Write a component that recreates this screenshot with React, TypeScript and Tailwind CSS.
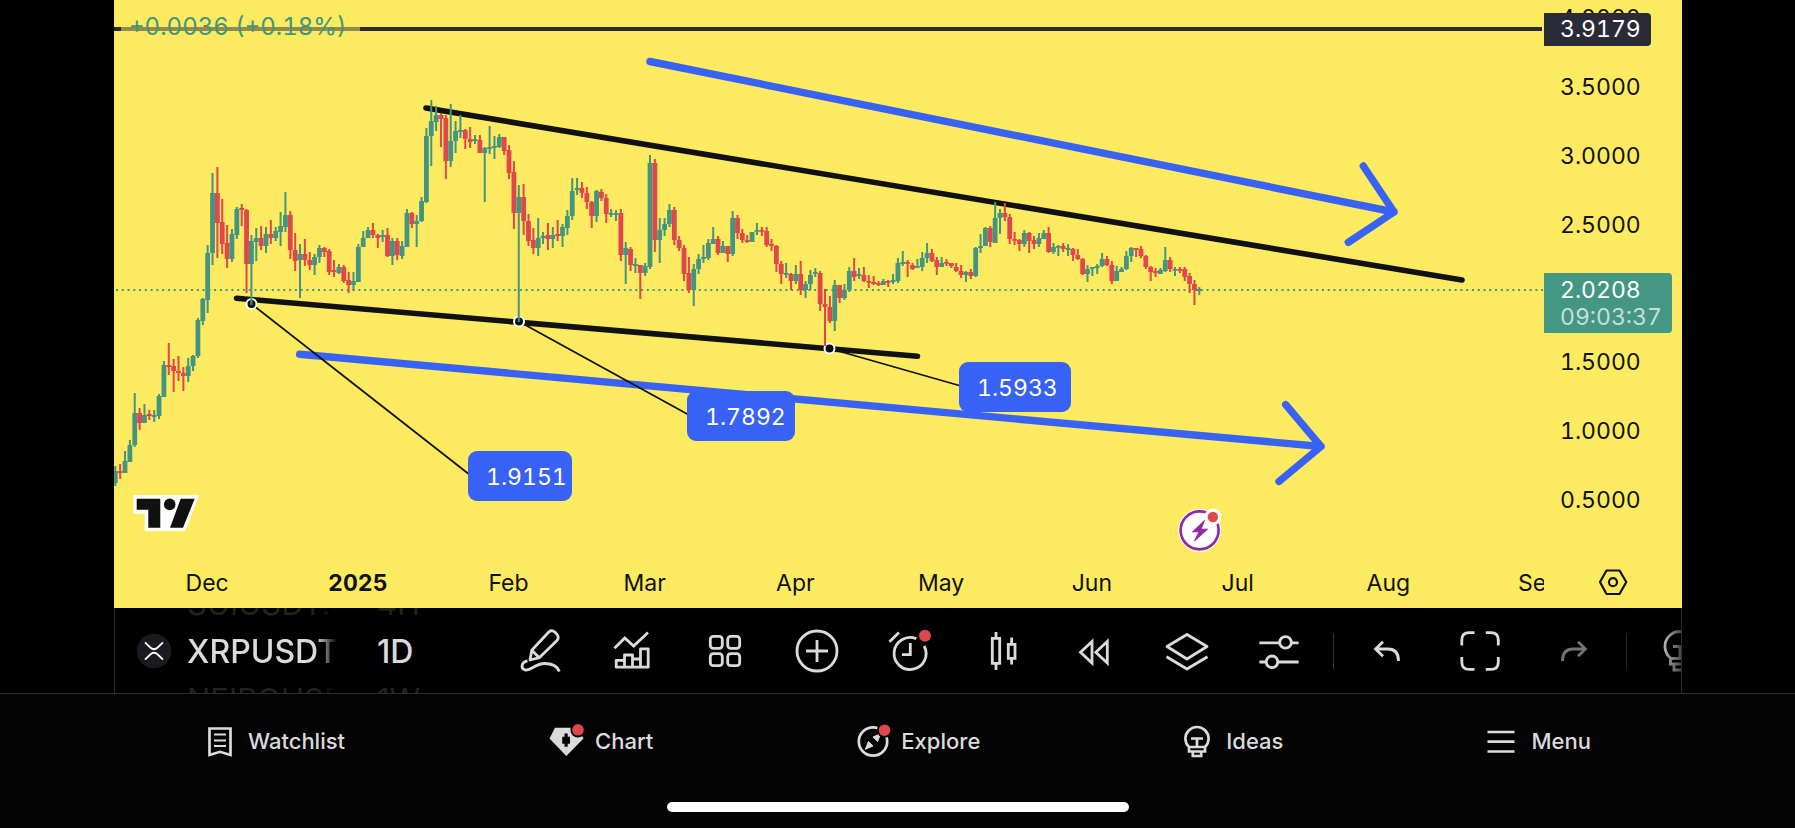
import React from "react";

type Candle = [dir: 0 | 1, high: number, top: number, bottom: number, low: number];

const UP = "#43957f";
const DOWN = "#e0474c";
const BLUE = "#3861f6";
const INK = "#111111";
const SANS = "Inter, 'Noto Sans', sans-serif";

const FIRST_X = 115.3;
const STEP = 4.861;

// Daily candles: [rising, high, body top, body bottom, low]
const candles: Candle[] = [
  [1, 466, 471, 483, 486], [0, 464, 471, 473, 479], [1, 451, 461, 473, 473], [1, 440, 445, 462, 462],
  [1, 393, 413, 445, 447], [0, 408, 413, 423, 430], [1, 404, 415, 423, 423], [0, 410, 414, 416, 420],
  [1, 410, 415, 417, 422], [1, 394, 396, 416, 419], [1, 361, 365, 397, 397], [0, 343, 365, 367, 375],
  [0, 359, 366, 371, 392], [0, 356, 371, 373, 381], [0, 367, 373, 376, 391], [1, 358, 366, 376, 382],
  [1, 355, 356, 366, 371], [1, 318, 320, 356, 358], [1, 298, 299, 321, 325], [1, 245, 253, 300, 313],
  [1, 173, 193, 253, 265], [0, 167, 193, 223, 258], [0, 199, 222, 244, 254], [0, 225, 243, 259, 268],
  [1, 229, 234, 259, 262], [1, 207, 209, 235, 239], [0, 204, 208, 210, 226], [0, 209, 210, 264, 293],
  [1, 235, 241, 264, 305], [1, 228, 238, 242, 261], [0, 226, 238, 246, 250], [1, 227, 234, 246, 253],
  [0, 220, 234, 238, 244], [1, 227, 231, 238, 241], [1, 212, 226, 232, 246], [1, 192, 215, 227, 232],
  [0, 211, 215, 250, 259], [0, 233, 250, 261, 271], [1, 244, 254, 260, 298], [0, 239, 254, 260, 266],
  [0, 252, 260, 265, 270], [1, 254, 257, 265, 275], [1, 245, 248, 257, 263], [0, 247, 248, 252, 257],
  [0, 249, 251, 272, 275], [0, 260, 270, 272, 277], [1, 264, 267, 273, 274], [0, 265, 267, 281, 283],
  [0, 272, 280, 285, 293], [1, 272, 281, 285, 291], [1, 244, 247, 282, 282], [1, 231, 238, 247, 247],
  [1, 227, 230, 238, 238], [0, 223, 230, 235, 238], [0, 234, 235, 238, 248], [1, 230, 235, 237, 242],
  [0, 228, 235, 256, 257], [1, 238, 241, 256, 265], [0, 238, 241, 255, 260], [1, 241, 246, 256, 259],
  [1, 209, 213, 247, 247], [0, 212, 213, 224, 228], [1, 215, 221, 224, 247], [1, 197, 201, 221, 222],
  [1, 128, 136, 202, 203], [1, 100, 121, 136, 166], [1, 106, 115, 122, 131], [0, 113, 115, 119, 147],
  [0, 115, 118, 161, 179], [1, 104, 141, 161, 167], [1, 121, 131, 141, 153], [1, 115, 130, 131, 138],
  [0, 129, 130, 139, 149], [0, 127, 139, 142, 148], [1, 135, 139, 141, 144], [0, 135, 140, 153, 153],
  [1, 147, 148, 153, 202], [1, 126, 147, 148, 154], [1, 136, 146, 147, 159], [1, 134, 137, 147, 148],
  [0, 137, 137, 151, 155], [0, 145, 150, 173, 179], [0, 161, 172, 213, 229], [1, 185, 197, 213, 322],
  [0, 184, 197, 221, 235], [0, 214, 221, 241, 246], [0, 228, 240, 248, 254], [1, 218, 238, 248, 256],
  [1, 232, 236, 238, 244], [0, 223, 235, 239, 250], [1, 227, 235, 239, 248], [0, 220, 234, 236, 241],
  [1, 224, 227, 236, 247], [1, 210, 216, 228, 235], [1, 178, 191, 216, 220], [1, 178, 188, 190, 195],
  [0, 182, 188, 193, 198], [0, 187, 193, 202, 209], [0, 201, 202, 216, 228], [1, 190, 191, 216, 222],
  [0, 189, 192, 198, 201], [0, 194, 198, 214, 223], [1, 209, 213, 215, 217], [1, 210, 213, 214, 221],
  [0, 209, 213, 255, 261], [1, 242, 248, 255, 284], [0, 247, 249, 265, 271], [1, 258, 264, 266, 273],
  [0, 265, 265, 273, 299], [1, 263, 266, 273, 276], [1, 155, 163, 267, 269], [0, 159, 163, 240, 252],
  [1, 218, 230, 240, 263], [1, 218, 224, 230, 236], [1, 204, 210, 224, 227], [0, 207, 210, 240, 245],
  [0, 236, 240, 248, 251], [0, 245, 248, 274, 281], [0, 257, 273, 290, 293], [1, 264, 269, 290, 306],
  [1, 254, 259, 269, 274], [1, 245, 257, 259, 263], [1, 239, 243, 258, 260], [1, 227, 239, 244, 244],
  [0, 236, 239, 253, 255], [1, 241, 246, 253, 253], [0, 246, 246, 254, 262], [1, 211, 218, 254, 256],
  [0, 215, 218, 233, 239], [0, 229, 233, 240, 243], [0, 235, 240, 241, 243], [1, 232, 232, 242, 242],
  [1, 223, 230, 231, 235], [0, 227, 230, 231, 236], [0, 227, 231, 245, 247], [0, 239, 244, 246, 251],
  [0, 245, 246, 264, 272], [0, 261, 264, 274, 284], [1, 263, 273, 274, 278], [0, 273, 274, 281, 290],
  [1, 265, 274, 281, 284], [0, 261, 274, 290, 295], [1, 281, 284, 290, 298], [1, 270, 275, 284, 290],
  [1, 268, 272, 273, 277], [0, 271, 273, 304, 311], [0, 289, 304, 307, 346], [0, 296, 307, 321, 323],
  [1, 280, 285, 321, 331], [0, 285, 285, 298, 303], [1, 284, 290, 298, 300], [1, 267, 271, 290, 292],
  [0, 258, 271, 277, 281], [1, 268, 274, 276, 279], [0, 267, 275, 281, 282], [0, 275, 281, 282, 288],
  [0, 276, 282, 284, 285], [0, 281, 283, 284, 286], [1, 279, 281, 285, 285], [0, 280, 281, 282, 287],
  [1, 274, 280, 282, 284], [1, 258, 263, 281, 283], [1, 251, 262, 264, 266], [0, 260, 262, 263, 277],
  [0, 263, 265, 269, 270], [1, 259, 266, 267, 268], [1, 252, 258, 267, 271], [1, 243, 253, 258, 263],
  [0, 249, 253, 261, 262], [0, 257, 260, 267, 275], [1, 257, 263, 267, 267], [0, 259, 262, 263, 266],
  [0, 263, 263, 266, 268], [0, 263, 267, 271, 272], [0, 265, 271, 275, 278], [1, 271, 272, 275, 282],
  [0, 269, 272, 276, 279], [1, 247, 248, 276, 277], [1, 234, 246, 248, 253], [1, 227, 228, 246, 246],
  [0, 226, 228, 242, 247], [1, 202, 218, 243, 243], [1, 209, 213, 218, 234], [0, 203, 213, 217, 221],
  [0, 214, 217, 239, 244], [0, 232, 239, 240, 245], [0, 239, 240, 244, 251], [1, 230, 233, 244, 247],
  [0, 232, 233, 241, 253], [0, 236, 240, 244, 249], [1, 233, 238, 244, 247], [1, 230, 233, 239, 239],
  [0, 227, 233, 252, 253], [1, 243, 247, 252, 254], [1, 245, 246, 247, 256], [0, 243, 246, 249, 252],
  [1, 244, 248, 250, 256], [0, 248, 249, 255, 261], [0, 249, 255, 259, 260], [0, 258, 259, 274, 275],
  [1, 265, 269, 274, 282], [1, 267, 267, 268, 276], [1, 264, 266, 268, 274], [1, 253, 259, 266, 267],
  [0, 256, 259, 265, 266], [0, 261, 265, 281, 284], [1, 266, 271, 281, 281], [1, 267, 269, 272, 272],
  [1, 251, 256, 269, 270], [1, 247, 248, 256, 262], [0, 248, 248, 250, 257], [0, 246, 249, 256, 258],
  [0, 255, 256, 267, 269], [0, 266, 267, 272, 281], [0, 268, 271, 273, 277], [1, 268, 270, 274, 274],
  [1, 247, 260, 271, 272], [0, 257, 260, 269, 272], [1, 267, 269, 270, 276], [0, 267, 269, 270, 273],
  [0, 267, 269, 277, 281], [0, 273, 276, 284, 293], [0, 280, 284, 290, 305], [1, 287, 289, 291, 295],
];

// Label and the index of the candle on the first day of that month
const months: [string, number][] = [
  ["Dec", 19], ["2025", 50], ["Feb", 81], ["Mar", 109], ["Apr", 140],
  ["May", 170], ["Jun", 201], ["Jul", 231], ["Aug", 262], ["Sep", 293],
];

const callouts = [
  { label: "1.9151", x: 468, y: 451, w: 104, from: [251.5, 304] },
  { label: "1.7892", x: 687, y: 391, w: 108, from: [519, 321.5] },
  { label: "1.5933", x: 959, y: 362, w: 112, from: [829.5, 348.5] },
];

// The 2.0000 tick gives way to the last-price tag
const prices = ["4.0000", "3.5000", "3.0000", "2.5000", "", "1.5000", "1.0000", "0.5000"];

function PriceChart() {
  return (
    <svg viewBox="114 0 1430 608" className="block h-auto w-full tabular-nums" role="img" aria-label="XRPUSDT daily candles">
      <path d="M114 29H1542" stroke="#2b2b38" strokeWidth="4" />
      <path d="M116 290H1543" stroke={UP} strokeWidth="2" strokeDasharray="2 3.77" />

      <g fill="none" stroke={INK} strokeWidth="5.6" strokeLinecap="round">
        <path d="M426 108L1462 280" />
        <path d="M236.5 298.3L917.5 356.2" />
      </g>
      <g fill="none" stroke={BLUE} strokeWidth="7.4" strokeLinecap="round" strokeLinejoin="round">
        <path d="M650 61.5L1394 212M1363.3 166L1394 212L1348.3 242.3" />
        <path d="M299.7 354.3L1321 446.5M1285.7 404.7L1321 446.5L1279 481.5" />
      </g>

      {callouts.map((c) => (
        <g key={c.label}>
          <path d={`M${c.from[0]} ${c.from[1]}L${c.x + 2} ${c.y + 24}`} stroke={INK} strokeWidth="1.8" />
          <circle cx={c.from[0]} cy={c.from[1]} r="5" fill={INK} stroke="#fff" strokeWidth="2" />
        </g>
      ))}

      {candles.map(([up, high, top, bottom, low], i) => {
        const x = FIRST_X + i * STEP;
        const color = up ? UP : DOWN;
        return (
          <g key={i} fill={color}>
            <rect x={x - 1} y={high} width="2" height={low - high} />
            <rect x={x - 2.4} y={top} width="4.8" height={Math.max(bottom - top, 1.8)} />
          </g>
        );
      })}

      {callouts.map((c) => (
        <g key={c.label}>
          <rect x={c.x} y={c.y} width={c.w} height="50" rx="9" fill={BLUE} />
          <text x={c.x + 18} y={c.y + 34} fill="#fff" fontFamily={SANS} fontSize="23">
            {c.label}
          </text>
        </g>
      ))}

      <g>
        <path d="M133.3 495H199.3L185.3 531H144.7V513.7H133.3Z" fill="#fff" />
        <path d="M136.7 498.7H160.3V527.7H148.3V509.7H136.7ZM180.7 498.7H194.7L183 527.7H170Z" fill={INK} />
        <circle cx="169.7" cy="504.4" r="5.8" fill={INK} />
      </g>

      <g>
        <circle cx="1199.6" cy="530.3" r="21.5" fill="#fff" />
        <circle cx="1199.6" cy="530.3" r="19" fill="#fff" stroke="#8e2aa8" strokeWidth="2.7" />
        <path d="M1204.5 520.5L1192.5 531.8H1199L1194.5 541L1207.5 529.2H1201Z" fill="#8e2aa8" stroke="#8e2aa8" strokeLinejoin="round" />
        <circle cx="1212.9" cy="517" r="8.5" fill="#fff" />
        <circle cx="1212.9" cy="517" r="5.2" fill={DOWN} />
      </g>

      {months.map(([label, day]) => (
        <text
          key={label}
          x={FIRST_X + day * STEP - 0.5}
          y="591"
          textAnchor="middle"
          fill={INK}
          fontFamily={SANS}
          fontSize="23"
          fontWeight={label === "2025" ? 700 : 400}
        >
          {label}
        </text>
      ))}
    </svg>
  );
}

function PriceAxis() {
  return (
    <div className="relative w-[138px] shrink-0 text-[23px] text-[#111111] tabular-nums">
      <div className="flex h-[516px] flex-col justify-between pt-0.5 pl-4 leading-8">
        {prices.map((p, i) => (
          <span key={i} className="h-8">
            {p}
          </span>
        ))}
      </div>
      <div className="absolute top-[13px] left-0 rounded-r bg-[#2b2b38] pr-2.5 pl-4 leading-[33px] text-white">3.9179</div>
      <div className="absolute top-[273px] left-0 rounded-r bg-[#449782] pt-1 pr-2.5 pb-0.5 pl-4 leading-[27px] text-white">
        <div>2.0208</div>
        <div className="text-[#c6e0d9]">09:03:37</div>
      </div>
      <button aria-label="Chart settings" className="absolute bottom-2.5 left-[53px]">
        <svg width="32" height="32" viewBox="0 0 32 32" fill="none" stroke={INK} strokeWidth="2.2" className="block">
          <path d="M9.5 4.5H22.5L29.3 16L22.5 28H9.5L3 16Z" strokeLinejoin="round" />
          <circle cx="16" cy="16.2" r="4" />
        </svg>
      </button>
    </div>
  );
}

function ToolButton({ label, muted, children }: { label: string; muted?: boolean; children: React.ReactNode }) {
  return (
    <button aria-label={label} className={muted ? "shrink-0 text-[#737373]" : "shrink-0 text-[#dbdbdb]"}>
      <svg width="44" height="44" viewBox="0 0 44 44" fill="none" stroke="currentColor" strokeWidth="2.8" className="block">
        {children}
      </svg>
    </button>
  );
}

function Picker({ items, wide }: { items: [string, string, string]; wide?: boolean }) {
  return (
    <div
      className={
        wide
          ? "flex h-full w-[150px] shrink-0 flex-col justify-center overflow-hidden pt-0.5 whitespace-nowrap [mask-image:linear-gradient(to_right,#000_86%,transparent)]"
          : "flex h-full w-[60px] shrink-0 flex-col justify-center overflow-hidden pt-0.5 whitespace-nowrap"
      }
    >
      <span className="h-12 shrink-0 text-[31px] leading-[48px] text-[#222222]">{items[0]}</span>
      <button className="h-12 shrink-0 text-left text-[32px] leading-[48px] font-medium text-[#dbdbdb]">{items[1]}</button>
      <span className="h-12 shrink-0 text-[31px] leading-[48px] text-[#222222]">{items[2]}</span>
    </div>
  );
}

function Toolbar() {
  return (
    <div className="mr-[113px] ml-[114px] flex h-[85px] items-center overflow-hidden border-x border-[#2e2e2e] bg-black">
      <div className="flex h-full w-[403px] shrink-0 items-center">
        <svg width="36" height="36" viewBox="0 0 36 36" className="mr-[15px] ml-[21px] shrink-0">
          <circle cx="18" cy="18" r="17.3" fill="#1a1b20" />
          <path d="M9 9.3L14.3 14.5Q18 18 21.7 14.5L27 9.3M9 26.7L14.3 21.5Q18 18 21.7 21.5L27 26.7" fill="none" stroke="#fff" strokeWidth="1.8" />
        </svg>
        <Picker items={["SUIUSDT.P", "XRPUSDT", "NEIROUSDT"]} wide />
        <div className="w-10 shrink-0" />
        <Picker items={["4H", "1D", "1W"]} />
      </div>
      <div className="flex min-w-0 flex-1 items-center overflow-hidden [mask-image:linear-gradient(to_right,#000_98%,transparent_101%)]">
        <div className="flex w-[783px] shrink-0 justify-between">
          <ToolButton label="Draw">
            <path d="M12 31L13.8 21.2L31 2.8Q33.8 0.6 36.8 3L39 5.4Q41.4 8.4 39 11.4L21.5 28.6ZM14 21.4L21 28.4" strokeLinejoin="round" />
            <path d="M9.5 31.8C3 33 2.5 39.6 7 41C13 42 17.5 34.5 26.5 34.5C34.5 34.5 39.5 37.5 41.3 42.5" />
          </ToolButton>
          <ToolButton label="Indicators">
            <path d="M4.5 19.3L14.8 9L23.6 17L38 3.6" />
            <path d="M6.2 38.2V31.3H14.5V26H22.5V30H30.5V19.8H38.2V38.2ZM14.5 31.3V38.2M22.5 30V38.2M30.5 30V38.2" strokeLinejoin="round" />
          </ToolButton>
          <ToolButton label="Layouts">
            <rect x="7.3" y="7.3" width="12" height="12" rx="3" />
            <rect x="24.7" y="7.3" width="12" height="12" rx="3" />
            <rect x="7.3" y="24.7" width="12" height="12" rx="3" />
            <rect x="24.7" y="24.7" width="12" height="12" rx="3" />
          </ToolButton>
          <ToolButton label="Add">
            <circle cx="22" cy="22" r="20" />
            <path d="M22 11V33M11 22H33" />
          </ToolButton>
          <ToolButton label="Alerts">
            <path d="M28.3 9.8A16 16 0 1 0 36.2 17" />
            <path d="M22.3 14V25.6H14M1.5 12.7L11 3.6" />
            <circle cx="37" cy="6.7" r="6" fill={DOWN} stroke="none" />
          </ToolButton>
          <ToolButton label="Chart type">
            <path d="M12.3 9.3H19.7V34.3H12.3ZM16 3V9.3M16 34.3V41M28.3 15.3H35V29.3H28.3ZM31.6 8.5V15.3M31.6 29.3V35.5" />
          </ToolButton>
          <ToolButton label="Replay">
            <path d="M20 12.5V34L8.5 23.3ZM35.3 12.5V34L23.8 23.3Z" />
          </ToolButton>
          <ToolButton label="Object tree">
            <path d="M22 5.5L42 17.5L22 30L2 17.5ZM1.5 27.8L22 40L42.5 27.8" strokeLinejoin="round" />
          </ToolButton>
          <ToolButton label="Settings">
            <path d="M2.4 13.8H22M35 13.8H41.6M2.4 33H9M21 33H41.6" />
            <circle cx="28.5" cy="13.4" r="5.8" />
            <circle cx="15" cy="32.8" r="5.8" />
          </ToolButton>
        </div>
        <div className="mr-[31px] ml-8 h-9 w-px shrink-0 bg-[#333333]" />
        <div className="flex w-[230px] shrink-0 justify-between">
          <ToolButton label="Undo">
            <path d="M18 12.8L10.6 20L18 27.2M11 20H23Q33.5 20 33.5 32" />
          </ToolButton>
          <ToolButton label="Full screen">
            <path d="M3.8 16.4V11Q3.8 3.6 11 3.6H16.5M27.8 3.6H33Q40.3 3.6 40.3 11V16.4M40.3 28V33Q40.3 40.4 33 40.4H27.8M16.5 40.4H11Q3.8 40.4 3.8 33V28" />
          </ToolButton>
          <ToolButton label="Redo" muted>
            <path d="M27 12.8L34.4 20L27 27.2M34 20H22Q11.5 20 11.5 32" />
          </ToolButton>
        </div>
        <div className="mx-[31px] h-9 w-px shrink-0 bg-[#262626]" />
        <ToolButton label="Publish idea">
          <path d="M13 29.5A15 15 0 1 1 31 29.5M12.5 29.5H31.5V35H12.5ZM16 35V41H28V35M15 17.5H29M22 17.5V29.5" />
        </ToolButton>
      </div>
    </div>
  );
}

function NavItem({ label, width, gap, children }: { label: string; width: number; gap: "tight" | "wide"; children: React.ReactNode }) {
  return (
    <a href="#" className={gap === "tight" ? "flex items-center gap-2.5" : "flex items-center gap-4"}>
      <svg width={width} height="34" viewBox={`0 0 ${width} 34`} fill="none" stroke="currentColor" strokeWidth="2.7">
        {children}
      </svg>
      {label}
    </a>
  );
}

function BottomNav() {
  return (
    <nav className="flex flex-1 flex-col items-center justify-between border-t border-[#2e2e2e] bg-[#040404] pb-4 text-[22px] font-medium text-[#dbdbdb]">
      <div className="flex h-[94px] w-full items-center justify-evenly pl-1">
        <NavItem label="Watchlist" width={24} gap="wide">
          <path d="M1.5 4.5H22.5V31L12 27.8L1.5 31Z" />
          <path d="M6 10.5H18M6 16.5H18M6 22H18" strokeWidth="2.2" />
        </NavItem>
        <NavItem label="Chart" width={36} gap="tight">
          <path d="M6 3.7H28.5L34.5 14.5L17.3 32L0.5 14.5Z" fill="currentColor" stroke="none" />
          <path d="M15.5 9.5H18.7V12.7H21V19.7H18.7V22.7H15.5V19.7H13.2V12.7H15.5Z" fill="#040404" stroke="none" />
          <circle cx="29" cy="5.8" r="7.6" fill="#040404" stroke="none" />
          <circle cx="29" cy="5.8" r="5.8" fill={DOWN} stroke="none" />
        </NavItem>
        <NavItem label="Explore" width={34} gap="tight">
          <circle cx="16" cy="17.5" r="14.2" />
          <path d="M11.5 17.5L16 22L8.3 25.3ZM16 13L20.5 17.5L23.7 9.8Z" fill="currentColor" stroke="currentColor" strokeWidth="1" />
          <circle cx="27.5" cy="6.2" r="7.6" fill="#040404" stroke="none" />
          <circle cx="27.5" cy="6.2" r="5.8" fill={DOWN} stroke="none" />
        </NavItem>
        <NavItem label="Ideas" width={26} gap="wide">
          <path d="M5 23A11.6 11.6 0 1 1 21 23M5 23H21V27.5H5ZM8.8 27.5V32H17.2V27.5M7 14.5H19M13 14.5V23" />
        </NavItem>
        <NavItem label="Menu" width={28} gap="wide">
          <path d="M0.5 8H27.5M0.5 17.7H27.5M0.5 27.5H27.5" />
        </NavItem>
      </div>
      <div className="h-2.5 w-[462px] rounded-full bg-white" />
    </nav>
  );
}

export default function App() {
  return (
    <div className="flex min-h-screen flex-col bg-black font-[Inter,'Noto_Sans',sans-serif]">
      <main className="relative mr-[113px] ml-[114px] flex bg-[#fceb60]">
        <div className="min-w-0 flex-1">
          <PriceChart />
        </div>
        <PriceAxis />
        <div className="absolute top-[9px] left-[7px] bg-[#fceb60]/50 pr-3.5 pl-2 text-[24px] leading-9 text-[#43957f] tabular-nums">
          +0.0036 (+0.18%)
        </div>
      </main>
      <Toolbar />
      <BottomNav />
    </div>
  );
}
